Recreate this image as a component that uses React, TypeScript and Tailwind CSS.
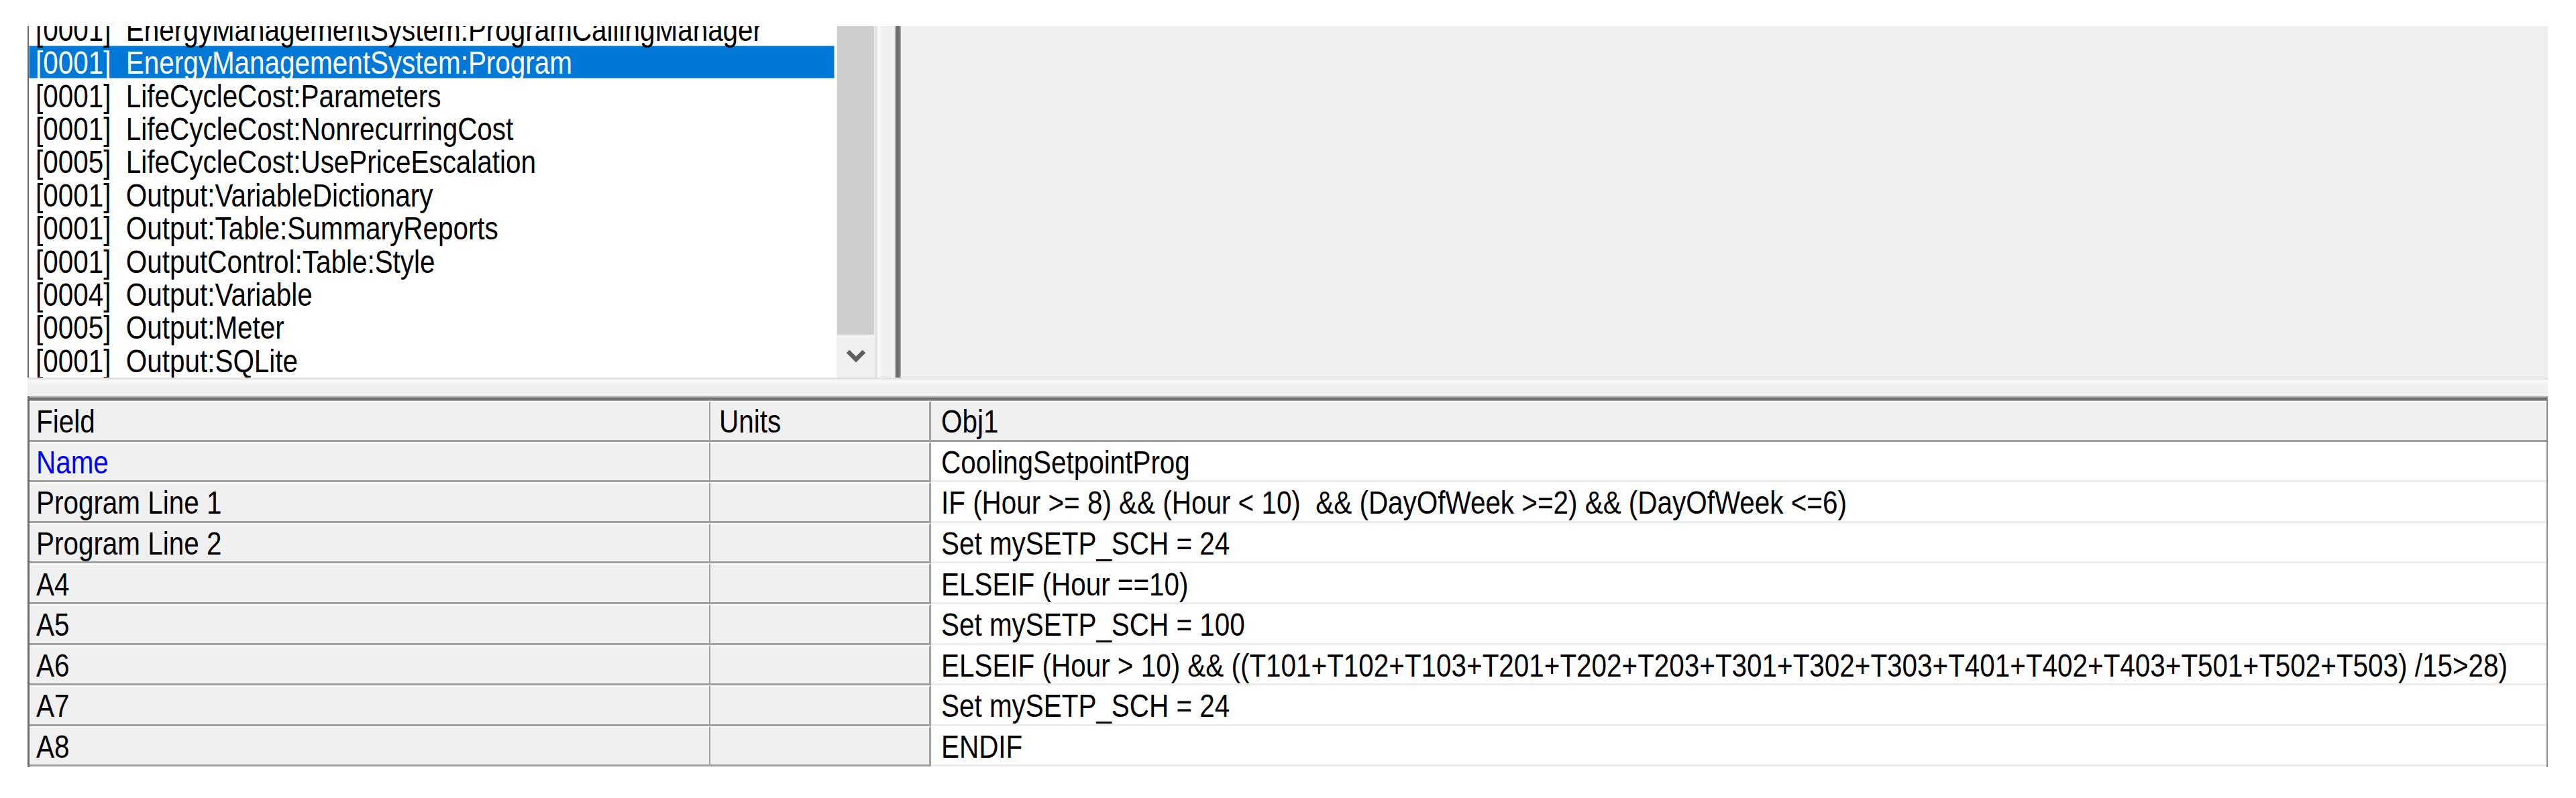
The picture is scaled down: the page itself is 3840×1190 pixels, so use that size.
import React from 'react';

const listItems: [string, string][] = [
  ['0001', 'EnergyManagementSystem:ProgramCallingManager'],
  ['0001', 'EnergyManagementSystem:Program'],
  ['0001', 'LifeCycleCost:Parameters'],
  ['0001', 'LifeCycleCost:NonrecurringCost'],
  ['0005', 'LifeCycleCost:UsePriceEscalation'],
  ['0001', 'Output:VariableDictionary'],
  ['0001', 'Output:Table:SummaryReports'],
  ['0001', 'OutputControl:Table:Style'],
  ['0004', 'Output:Variable'],
  ['0005', 'Output:Meter'],
  ['0001', 'Output:SQLite'],
];

const rows: { field: string; value: string; blue?: boolean }[] = [
  { field: 'Name', value: 'CoolingSetpointProg', blue: true },
  { field: 'Program Line 1', value: 'IF (Hour >= 8) && (Hour < 10)  && (DayOfWeek >=2) && (DayOfWeek <=6)' },
  { field: 'Program Line 2', value: 'Set mySETP_SCH = 24' },
  { field: 'A4', value: 'ELSEIF (Hour ==10)' },
  { field: 'A5', value: 'Set mySETP_SCH = 100' },
  {
    field: 'A6',
    value:
      'ELSEIF (Hour > 10) && ((T101+T102+T103+T201+T202+T203+T301+T302+T303+T401+T402+T403+T501+T502+T503) /15>28)',
  },
  { field: 'A7', value: 'Set mySETP_SCH = 24' },
  { field: 'A8', value: 'ENDIF' },
];

function T({ children, className = '' }: { children: React.ReactNode; className?: string }) {
  return (
    <span
      className={`inline-block whitespace-pre origin-left [transform:translateY(1px)_scaleX(0.825)] text-[49px] leading-none ${className}`}
    >
      {children}
    </span>
  );
}

function GridRow({
  field,
  units,
  value,
  blue,
  header,
}: {
  field: string;
  units?: string;
  value: string;
  blue?: boolean;
  header?: boolean;
}) {
  return (
    <div className="flex h-[60.6px] shrink-0">
      <div className="w-[1015px] shrink-0 flex items-center bg-[#f0f0f0] border-t-2 border-t-[#fbfbfb] border-b-[3px] border-b-[#a0a0a0] border-r-2 border-r-[#a0a0a0] pl-[10px] overflow-hidden">
        <T className={blue ? 'text-[#0000ff]' : 'text-black'}>{field}</T>
      </div>
      <div className="w-[329px] shrink-0 flex items-center bg-[#f0f0f0] border-t-2 border-t-[#fbfbfb] border-b-[3px] border-b-[#a0a0a0] border-r-[3px] border-r-[#a0a0a0] pl-[13px] overflow-hidden">
        {units ? <T className="text-black">{units}</T> : null}
      </div>
      <div
        className={
          header
            ? 'flex-1 min-w-0 overflow-hidden flex items-center bg-[#f0f0f0] border-t-2 border-t-[#fbfbfb] border-b-[3px] border-b-[#a0a0a0] pl-[15px]'
            : 'flex-1 min-w-0 overflow-hidden flex items-center bg-white border-t-2 border-t-white border-b-[3px] border-b-[#ececec] pl-[15px]'
        }
      >
        <T className="text-black">{value}</T>
      </div>
    </div>
  );
}

export default function App() {
  return (
    <div className="w-[3840px] h-[1190px] bg-white pt-[39px] pl-[41px] overflow-hidden font-['Liberation_Sans',Arial,sans-serif]">
      <div className="w-[3757px] flex flex-col bg-[#f0f0f0]">
        {/* top section */}
        <div className="h-[524px] flex">
          {/* class list */}
          <div className="w-[1206px] h-full shrink-0 border-l-2 border-l-[#696969] bg-white pr-[3px] overflow-hidden">
            <div className="-mt-[20.4px]">
              {listItems.map(([n, name], i) => (
                <div
                  key={i}
                  className={
                    i === 1
                      ? 'h-[49.4px] flex items-center pl-[10px] bg-[#0078d7] text-white shadow-[inset_0_0_0_1px_#7ab8ec]'
                      : 'h-[49.4px] flex items-center pl-[10px] text-black'
                  }
                >
                  <T>{`[${n}]  ${name}`}</T>
                </div>
              ))}
            </div>
          </div>
          {/* scrollbar */}
          <div className="w-[57px] h-full shrink-0 bg-[#f0f0f0] flex flex-col">
            <div className="h-[460px] mx-[1px] bg-[#cdcdcd]" />
            <div className="flex-1 flex items-center justify-center">
              <svg width="30" height="24" viewBox="0 0 30 24">
                <polyline points="3,5 15,17 27,5" fill="none" stroke="#606060" strokeWidth="6.5" />
              </svg>
            </div>
          </div>
          <div className="w-[9px] h-full shrink-0 bg-[linear-gradient(to_right,#e3e3e3_0px,#e3e3e3_4px,#f7f7f7_4px)]" />
          {/* splitter gap */}
          <div className="w-[21px] h-full shrink-0 bg-[#f0f0f0]" />
          {/* right panel */}
          <div className="flex-1 h-full flex">
            <div className="w-[9px] h-full shrink-0 bg-[linear-gradient(to_right,#a8a8a8_0px,#a8a8a8_2px,#6d6d6d_2px,#6d6d6d_7px,#a0a0a0_7px)]" />
            <div className="flex-1 h-full bg-[#efefef]" />
          </div>
        </div>
        {/* strip */}
        <div className="h-[28px] shrink-0 bg-[linear-gradient(to_bottom,#e3e3e3_0px,#e3e3e3_3px,#f7f7f7_3px,#f7f7f7_8px,#f0f0f0_8px)]" />
        {/* grid */}
        <div className="h-[553px] flex flex-col border-l-[3px] border-l-[#6b6b6b] border-r-2 border-r-[#8a8a8a] bg-white">
          <div className="h-[7px] shrink-0 bg-[linear-gradient(to_bottom,#a8a8a8_0px,#a8a8a8_2px,#6d6d6d_2px,#6d6d6d_5px,#a0a0a0_5px)]" />
          <GridRow field="Field" units="Units" value="Obj1" header />
          {rows.map((r, i) => (
            <GridRow key={i} field={r.field} value={r.value} blue={r.blue} />
          ))}
        </div>
      </div>
    </div>
  );
}
